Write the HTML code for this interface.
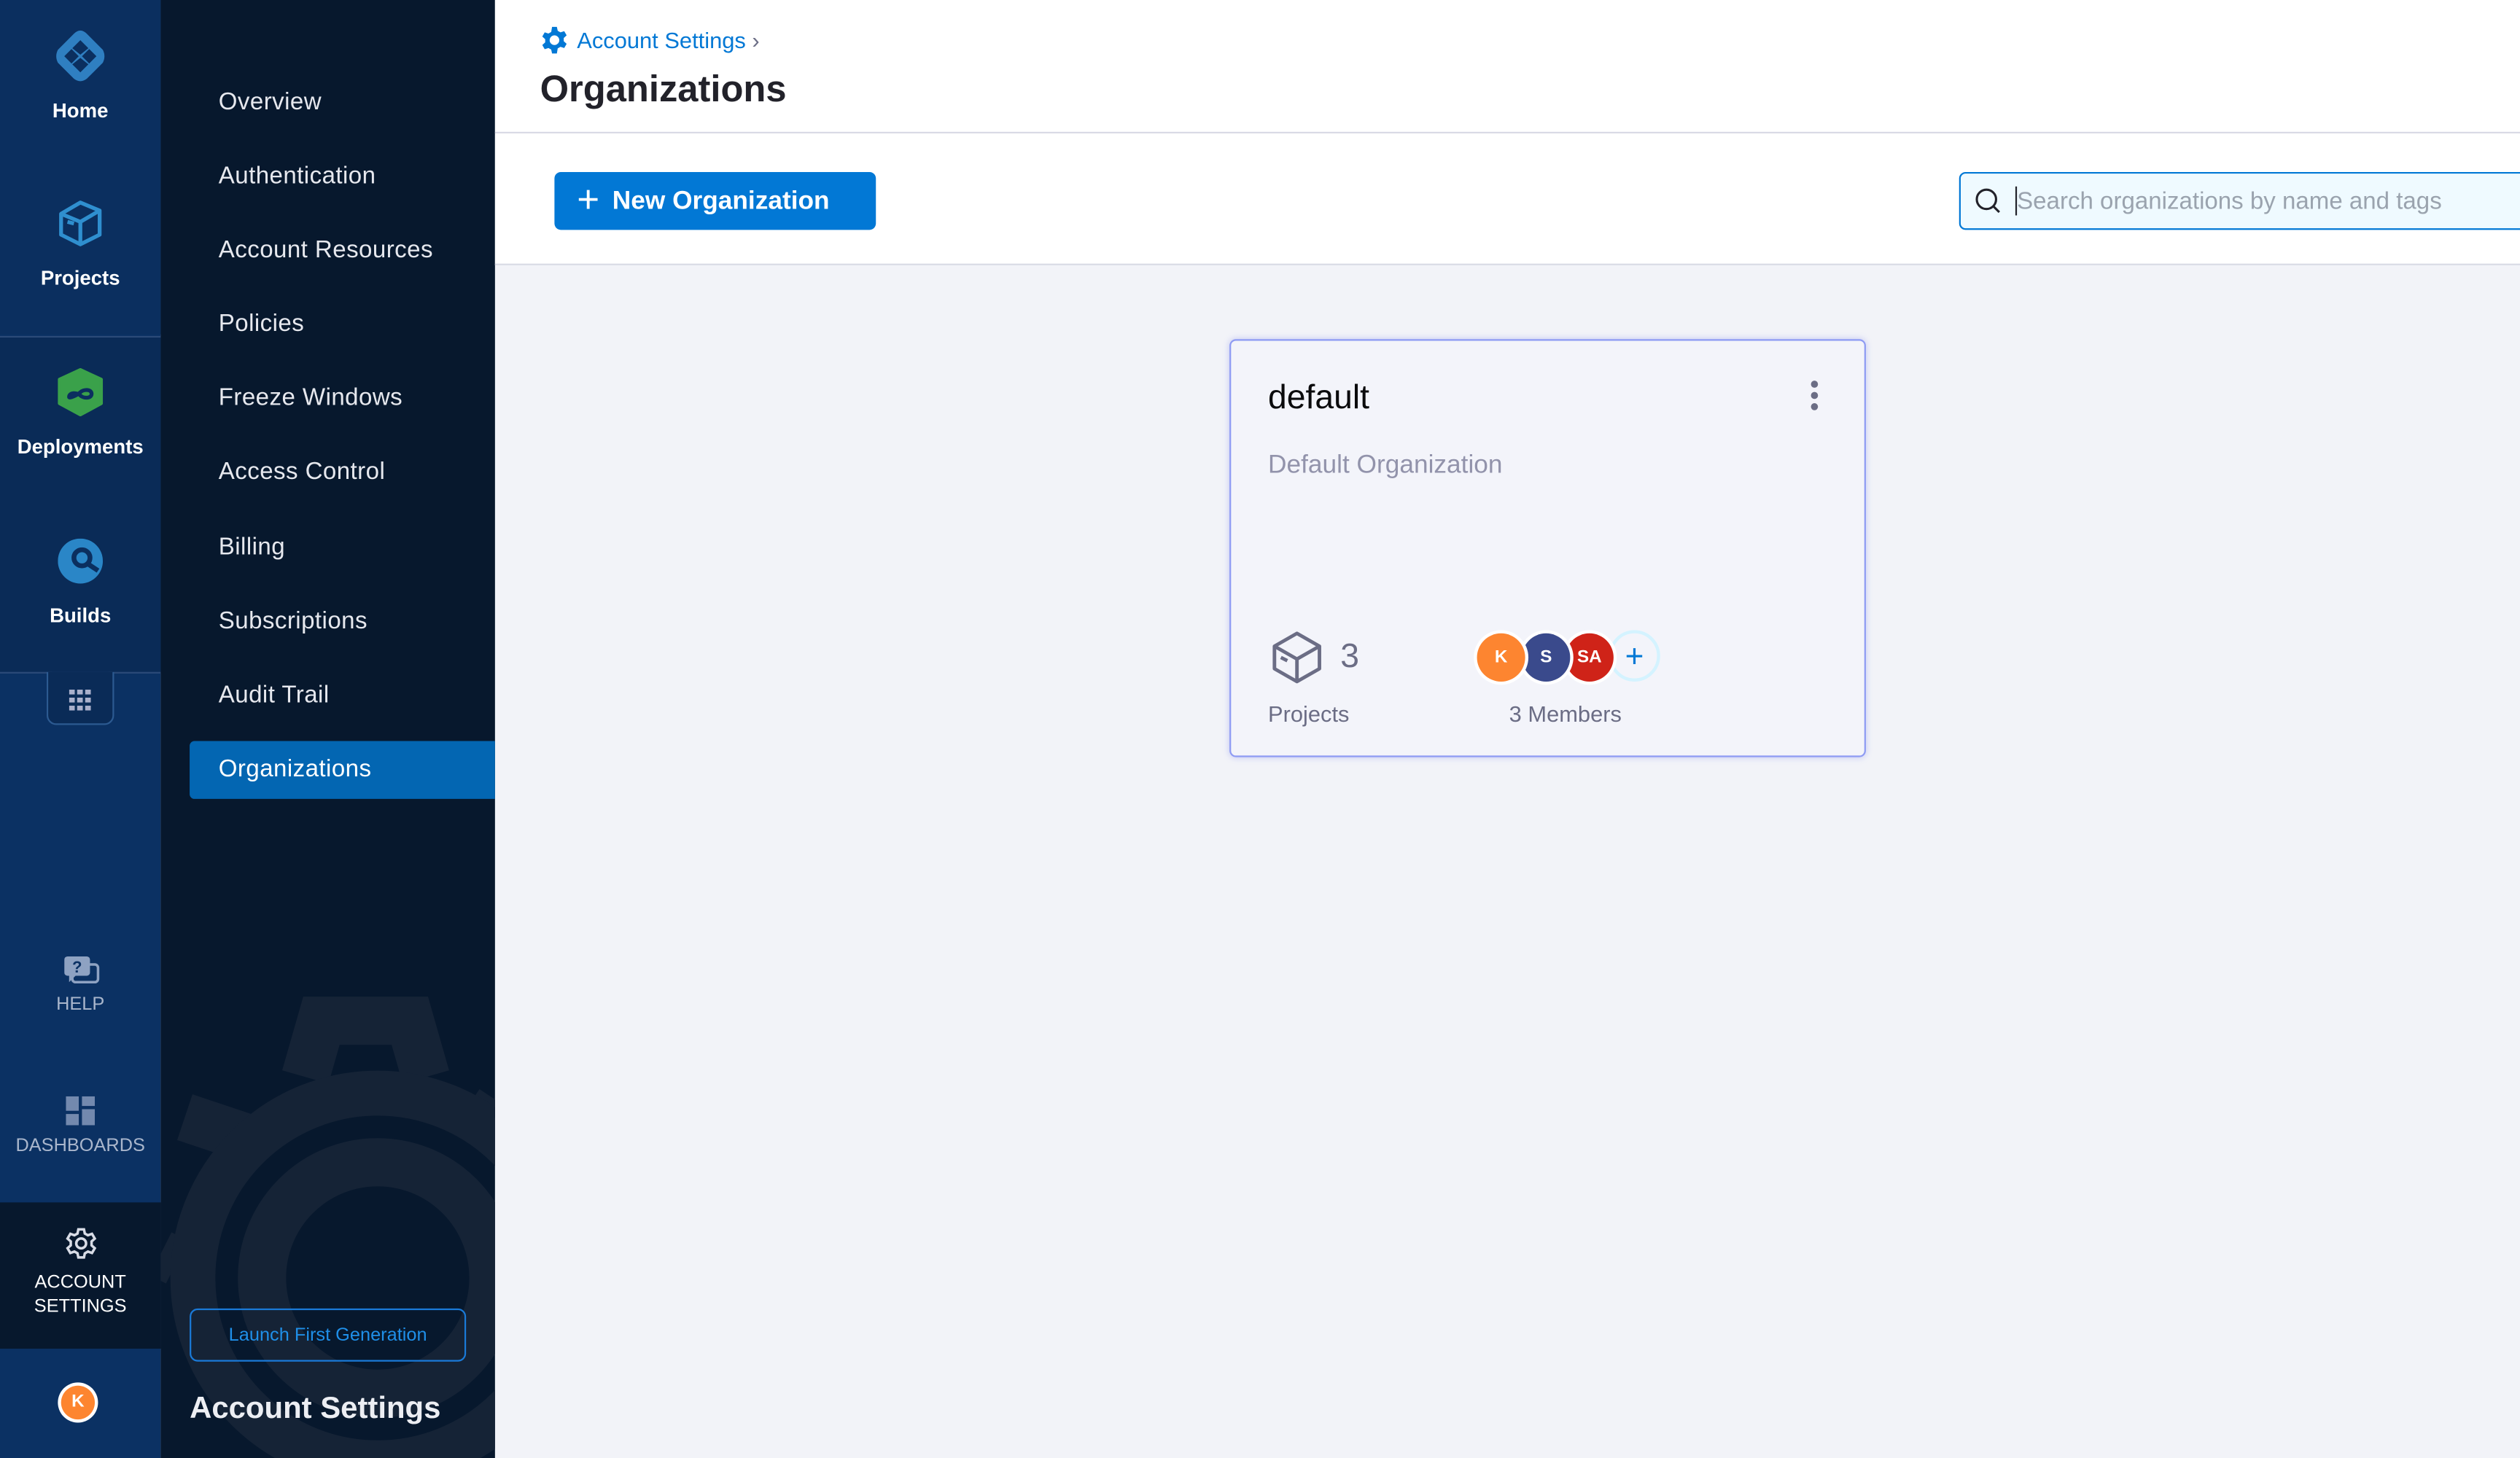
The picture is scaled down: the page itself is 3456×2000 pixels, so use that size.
<!DOCTYPE html>
<html><head><meta charset="utf-8"><style>
html,body{margin:0;padding:0;width:3456px;height:2000px;overflow:hidden;background:#f2f3f8}
#w{position:absolute;left:0;top:0;width:1568px;height:907px;transform:scale(2.20408,2.20507);transform-origin:0 0;font-family:"Liberation Sans",sans-serif;background:#f2f3f8}
.abs{position:absolute}
#rail{left:0;top:0;width:100px;height:907px;background:#0b3163}
#rail .it{position:absolute;left:0;width:100px;text-align:center;color:#fff;font-size:12.5px;font-weight:bold}
#side{left:100px;top:0;width:208px;height:907px;background:#07182d;overflow:hidden}
#side .n{position:absolute;left:36px;color:#e6e8ee;font-size:15px;letter-spacing:.2px}
</style></head><body><div id="w">
<div id="rail" class="abs">
 <div class="abs" style="left:0;top:0;width:100px;height:208px;background:#0b2f5f"></div>
 <div class="abs" style="left:0;top:209px;width:100px;height:1px;background:#2b4a78"></div>
 <div class="abs" style="left:0;top:210px;width:100px;height:208px;background:#0a2b57"></div>
 <div class="abs" style="left:0;top:418px;width:100px;height:1px;background:#2b4a78"></div>
 <svg class="abs" style="left:33px;top:18px" width="34" height="34" viewBox="0 0 34 34"><path d="M17 1 Q19 1 21 3 L31 13 Q33 17 31 21 L21 31 Q17 34 13 31 L3 21 Q1 17 3 13 L13 3 Q15 1 17 1Z" fill="#2f7fc1"/><path d="M17 7 L22 12 L17 16 L12 12Z M17 18 L22 22 L17 27 L12 22Z M7 17 L11.5 12.5 L16 17 L11.5 21.5Z M18 17 L22.5 12.5 L27 17 L22.5 21.5Z" fill="#0b2f5f"/></svg>
 <div class="it" style="top:62px">Home</div>
 <svg class="abs" style="left:36px;top:124px" width="28" height="30" viewBox="0 0 28 30" fill="none" stroke="#2f8fcf" stroke-width="2.4" stroke-linejoin="round"><path d="M14 2 L26 7 L26 22 L14 28 L2 22 L2 9 Z M2 9 L14 14 L26 7 M14 14 L14 28 M6 14 L10 15"/></svg>
 <div class="it" style="top:166px">Projects</div>
 <svg class="abs" style="left:35px;top:229px" width="30" height="30" viewBox="0 0 30 30"><path d="M15 1 L28 7 L28 22 L15 29 L2 22 L2 7Z" fill="#3aa14a" stroke="#3aa14a" stroke-width="2" stroke-linejoin="round"/><path d="M8 18c0-3 5-3 7-1s7 2 7-1-5-3-7-1-7 4-7 3z" fill="none" stroke="#0b2f5f" stroke-width="2.4"/></svg>
 <div class="it" style="top:271px">Deployments</div>
 <svg class="abs" style="left:36px;top:335px" width="28" height="28" viewBox="0 0 28 28"><circle cx="14" cy="14" r="14" fill="#2a86c7"/><circle cx="15" cy="12" r="5" fill="none" stroke="#0b2f5f" stroke-width="3"/><path d="M19 16l6 4" stroke="#0b2f5f" stroke-width="3"/></svg>
 <div class="it" style="top:376px">Builds</div>
 <div class="abs" style="left:29px;top:418px;width:40px;height:32px;background:#0a2b57;border:1.5px solid #2c5a91;border-top:none;border-radius:0 0 6px 6px"></div>
 <svg class="abs" style="left:43px;top:429px" width="14" height="13" viewBox="0 0 14 13" fill="#aab0cc"><rect x="0" y="0" width="3.5" height="3"/><rect x="5" y="0" width="3.5" height="3"/><rect x="10" y="0" width="3.5" height="3"/><rect x="0" y="5" width="3.5" height="3"/><rect x="5" y="5" width="3.5" height="3"/><rect x="10" y="5" width="3.5" height="3"/><rect x="0" y="10" width="3.5" height="3"/><rect x="5" y="10" width="3.5" height="3"/><rect x="10" y="10" width="3.5" height="3"/></svg>
 <svg class="abs" style="left:40px;top:595px" width="22" height="20" viewBox="0 0 22 20"><rect x="5" y="5" width="16" height="11" rx="2" fill="none" stroke="#8ea2c2" stroke-width="1.6"/><rect x="0" y="0" width="16" height="12" rx="2" fill="#8ea2c2"/><path d="M3 12 L3 16 L7 12Z" fill="#8ea2c2"/><text x="8" y="10" font-size="10" font-weight="bold" fill="#0b3163" text-anchor="middle" font-family="Liberation Sans">?</text></svg>
 <div class="it" style="top:619px;color:#a9b6cc;font-weight:normal;font-size:11.5px">HELP</div>
 <svg class="abs" style="left:41px;top:682px" width="18" height="18" viewBox="0 0 18 18" fill="#7389ae"><rect x="0" y="0" width="8" height="9"/><rect x="10" y="0" width="8" height="6"/><rect x="0" y="11" width="8" height="7"/><rect x="10" y="8" width="8" height="10"/></svg>
 <div class="it" style="top:707px;color:#a9b6cc;font-weight:normal;font-size:11.5px">DASHBOARDS</div>
 <div class="abs" style="left:0;top:748px;width:100px;height:91px;background:#07182d"></div>
 <svg class="abs" style="left:40px;top:763px" width="21" height="21" viewBox="0 0 24 24" fill="none" stroke="#d8dce6" stroke-width="1.8"><circle cx="12" cy="12" r="3.5"/><path d="M10 2h4l.6 3 2.2 1.2 2.9-1 2 3.4-2.3 2v2.8l2.3 2-2 3.4-2.9-1-2.2 1.3L14 22h-4l-.6-3-2.2-1.2-2.9 1-2-3.4 2.3-2v-2.8l-2.3-2 2-3.4 2.9 1L9.4 5z"/></svg>
 <div class="it" style="top:791px;font-weight:normal;font-size:11.5px;line-height:15px">ACCOUNT<br>SETTINGS</div>
 <div class="abs" style="left:36px;top:860px;width:25px;height:25px;border-radius:50%;background:#fff"></div>
 <div class="abs" style="left:38px;top:862px;width:21px;height:21px;border-radius:50%;background:#fd8530;color:#fff;font-size:11px;font-weight:bold;text-align:center;line-height:21px">K</div>
</div>
<div id="side" class="abs">
 <svg class="abs" style="left:-10px;top:615px" width="230" height="300" viewBox="0 0 230 300" fill="none" stroke="#152336" stroke-width="30"><circle cx="145" cy="180" r="72"/><path d="M100 55 L110 20 L165 20 L175 55 M25 80 L70 95 M215 85 L200 75 M20 170 L10 165"/><circle cx="145" cy="180" r="115" stroke-width="28"/></svg>
 <div class="n" style="top:55px">Overview</div>
 <div class="n" style="top:101px">Authentication</div>
 <div class="n" style="top:147px">Account Resources</div>
 <div class="n" style="top:193px">Policies</div>
 <div class="n" style="top:239px">Freeze Windows</div>
 <div class="n" style="top:285px">Access Control</div>
 <div class="n" style="top:332px">Billing</div>
 <div class="n" style="top:378px">Subscriptions</div>
 <div class="n" style="top:424px">Audit Trail</div>
 <div class="abs" style="left:18px;top:461px;width:195px;height:36px;background:#0366b2;border-radius:3px"></div>
 <div class="n" style="top:470px;color:#fff">Organizations</div>
 <div class="abs" style="left:18px;top:814px;width:170px;height:31px;border:1.3px solid #1a7ad8;border-radius:5px;color:#1f8fe8;font-size:11.5px;text-align:center;line-height:32px">Launch First Generation</div>
 <div class="abs" style="left:18px;top:866px;color:#eceef3;font-size:19px;font-weight:bold">Account Settings</div>
</div>
<div class="abs" style="left:308px;top:0;width:1260px;height:82px;background:#fff;border-bottom:1px solid #d9dae5"></div>
<svg class="abs" style="left:336px;top:16px" width="18" height="18" viewBox="0 0 24 24"><path fill="#0278d5" d="M10 1h4l.7 3.2 2.3 1.3 3.1-1 2 3.5-2.4 2.2v2.6l2.4 2.2-2 3.5-3.1-1-2.3 1.3L14 23h-4l-.7-3.2-2.3-1.3-3.1 1-2-3.5 2.4-2.2v-2.6L1.9 9l2-3.5 3.1 1 2.3-1.3z"/><circle cx="12" cy="12" r="4" fill="#fff"/></svg>
<div class="abs" style="left:359px;top:17px;color:#0278d5;font-size:14px">Account Settings <span style="color:#6b6d85">›</span></div>
<div class="abs" style="left:336px;top:42px;color:#22222a;font-size:23px;font-weight:bold">Organizations</div>
<div class="abs" style="left:308px;top:83px;width:1260px;height:81px;background:#fff;border-bottom:1px solid #d9dae5"></div>
<div class="abs" style="left:345px;top:107px;width:200px;height:36px;background:#0278d5;border-radius:4px;color:#fff;font-size:16px;font-weight:bold;line-height:37px"><span style="position:absolute;left:14px;font-size:24px;font-weight:normal;top:-1px">+</span><span style="position:absolute;left:36px">New Organization</span></div>
<div class="abs" style="left:1219px;top:107px;width:360px;height:34px;background:#effaff;border:1.3px solid #0278d5;border-radius:4px"></div>
<svg class="abs" style="left:1228px;top:116px" width="18" height="18" viewBox="0 0 18 18" fill="none" stroke="#22222a" stroke-width="1.4"><circle cx="8" cy="8" r="6"/><path d="M12.5 12.5l3.5 3.5"/></svg>
<div class="abs" style="left:1254px;top:116px;width:1px;height:18px;background:#22222a"></div>
<div class="abs" style="left:1255px;top:117px;color:#9aa3ae;font-size:15px">Search organizations by name and tags</div>
<div class="abs" style="left:765px;top:211px;width:394px;height:258px;background:#f3f4fa;border:1.5px solid #8e9bf3;border-radius:4px;box-shadow:0 0 4px rgba(120,130,240,.4)"></div>
<div class="abs" style="left:789px;top:236px;color:#0b0b0d;font-size:21px">default</div>
<svg class="abs" style="left:1125px;top:236px" width="8" height="20" viewBox="0 0 8 20" fill="#6b6d85"><circle cx="4" cy="3" r="2.2"/><circle cx="4" cy="10" r="2.2"/><circle cx="4" cy="17" r="2.2"/></svg>
<div class="abs" style="left:789px;top:281px;color:#9293ab;font-size:16px">Default Organization</div>
<svg class="abs" style="left:791px;top:392px" width="32" height="34" viewBox="0 0 32 34" fill="none" stroke="#6b6d85" stroke-width="2.2" stroke-linejoin="round"><path d="M16 2 L30 10 L30 24 L16 32 L2 24 L2 10 Z M2 10 L16 18 L30 10 M16 18 L16 32 M6 17 L10 19"/></svg>
<div class="abs" style="left:834px;top:397px;color:#6b6d85;font-size:21px">3</div>
<div class="abs" style="left:789px;top:436px;color:#6b6d85;font-size:14px">Projects</div>
<div class="abs" style="left:1001px;top:392px;width:32px;height:32px;border-radius:50%;border:2px solid #d4f3ff;box-sizing:border-box;color:#0278d5;text-align:center;line-height:30px;font-size:20px">+</div>
<div class="abs" style="left:972px;top:392px;width:34px;height:34px;border-radius:50%;background:#fff"></div>
<div class="abs" style="left:974px;top:394px;width:30px;height:30px;border-radius:50%;background:#cf2318;color:#fff;font-size:11px;font-weight:bold;text-align:center;line-height:30px">SA</div>
<div class="abs" style="left:945px;top:392px;width:34px;height:34px;border-radius:50%;background:#fff"></div>
<div class="abs" style="left:947px;top:394px;width:30px;height:30px;border-radius:50%;background:#3a4a8c;color:#fff;font-size:11px;font-weight:bold;text-align:center;line-height:30px">S</div>
<div class="abs" style="left:917px;top:392px;width:34px;height:34px;border-radius:50%;background:#fff"></div>
<div class="abs" style="left:919px;top:394px;width:30px;height:30px;border-radius:50%;background:#fd8530;color:#fff;font-size:11px;font-weight:bold;text-align:center;line-height:30px">K</div>
<div class="abs" style="left:939px;top:436px;color:#6b6d85;font-size:14px">3 Members</div>
</div></body></html>
